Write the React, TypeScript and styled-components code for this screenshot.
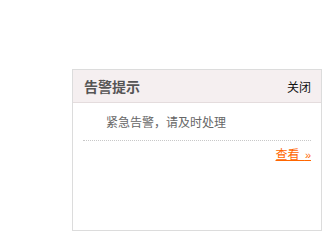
import React from "react";
import styled, { createGlobalStyle } from "styled-components";

const GlobalStyle = createGlobalStyle`
    html, body {
        margin: 0;
        padding: 0;
        background: #fff;
        font-family: "Noto Sans CJK SC", "Liberation Sans", sans-serif;
    }
`;

export default function App() {
    return (
        <>
            <GlobalStyle />
            <Page>
                <Alert>
                    <Header>
                        <Title>告警提示</Title>
                        <Close>关闭</Close>
                    </Header>
                    <Body>
                        <Message>紧急告警，请及时处理</Message>
                        <Footer>
                            <ViewLink href="#">查看&nbsp;&nbsp;<Arrow>»</Arrow></ViewLink>
                        </Footer>
                    </Body>
                </Alert>
            </Page>
        </>
    );
}

const Page = styled.div`
    padding: 69px 0 0 72px;
`;

const Alert = styled.div`
    width: 248px;
    height: 160px;
    border: 1px solid #dcdcdc;
    background: #fff;
    display: flex;
    flex-direction: column;
`;

const Header = styled.div`
    display: flex;
    justify-content: space-between;
    align-items: center;
    height: 32px;
    padding: 0 10px 0 11px;
    background: #f5eff0;
    border-bottom: 1px solid #e4dcdd;
`;

const Title = styled.span`
    font-size: 14px;
    font-weight: bold;
    color: #555;
`;

const Close = styled.span`
    font-size: 12px;
    font-weight: 400;
    color: #111;
    cursor: pointer;
`;

const Body = styled.div`
    padding: 0 10px 0 10px;
`;

const Message = styled.div`
    font-size: 12px;
    color: #666;
    line-height: 16px;
    padding: 11px 0 10px 23px;
    border-bottom: 1px dotted #c8c8c8;
`;

const Footer = styled.div`
    display: flex;
    justify-content: flex-end;
    padding-top: 5px;
`;

const ViewLink = styled.a`
    font-size: 12px;
    line-height: 16px;
    color: #ff6600;
    text-decoration: underline;
`;

const Arrow = styled.span`
    font-family: "Liberation Sans", sans-serif;
    font-size: 11px;
`;
